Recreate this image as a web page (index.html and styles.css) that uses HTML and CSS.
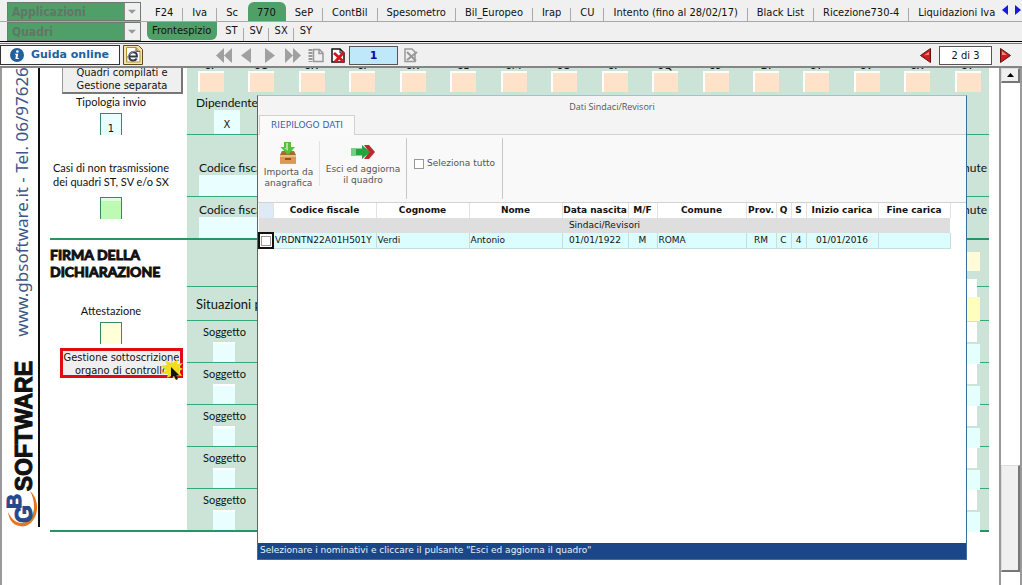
FILE: index.html
```html
<!DOCTYPE html>
<html lang="it">
<head>
<meta charset="utf-8">
<title>GB Software - 770</title>
<link rel="stylesheet" href="styles.css">
</head>
<body>
<div class="app">
  <header class="menus">
    <div class="menu-row">
      <select class="menu-select" aria-label="Applicazioni"><option>Applicazioni</option></select>
      <nav class="tabs tabs-main">
        <a href="#">F24</a><a href="#">Iva</a><a href="#" class="no-sep">Sc</a><a href="#" class="active">770</a><a href="#">SeP</a><a href="#">ContBil</a><a href="#">Spesometro</a><a href="#">Bil_Europeo</a><a href="#">Irap</a><a href="#">CU</a><a href="#">Intento (fino al 28/02/17)</a><a href="#">Black List</a><a href="#">Ricezione730-4</a><a href="#" class="no-sep">Liquidazioni Iva</a>
      </nav>
      <div class="tab-scroll">
        <button type="button" aria-label="Schede precedenti"><svg width="6" height="10" viewBox="0 0 6 10"><path d="M6 0v10L0 5z" fill="#1818e0"/></svg></button>
        <button type="button" aria-label="Schede successive"><svg width="6" height="10" viewBox="0 0 6 10"><path d="M0 0v10l6-5z" fill="#1818e0"/></svg></button>
      </div>
    </div>
    <div class="menu-row">
      <select class="menu-select" aria-label="Quadri"><option>Quadri</option></select>
      <nav class="tabs tabs-sub">
        <a href="#" class="active">Frontespizio</a><a href="#">ST</a><a href="#">SV</a><a href="#">SX</a><a href="#" class="no-sep">SY</a>
      </nav>
    </div>
  </header>

  <div class="toolbar">
    <button type="button" class="guide">
      <svg width="14" height="14" viewBox="0 0 14 14"><circle cx="7" cy="7" r="7" fill="#22609c"/><circle cx="7.4" cy="3.5" r="1.3" fill="#fff"/><path d="M5 5.8h3.2L7.5 10h1.3v1H5.4L6 6.8H5z" fill="#fff"/></svg>
      Guida online
    </button>
    <button type="button" class="browser" aria-label="Apri nel browser">
      <svg width="20" height="20" viewBox="0 0 20 20"><path d="M.5.500h15l4 4v15H.5z" fill="#f5e3a8" stroke="#5c4a1c"/><path d="M3.500 2.500h9.500l4 4v10.500h-13.500z" fill="#fff" stroke="#b39238"/><path d="M13 2.500v4h4" fill="#d8b95a" stroke="#7c6428"/><path d="M6.500 11.500H14c0-2.600-1.600-4.200-3.800-4.200S6.200 9 6.200 11.500s1.700 4 4 4c1.600 0 2.900-.7 3.500-2" fill="none" stroke="#333b48" stroke-width="1.900"/><path d="M4 16C2.500 12 8 6 15 5.500" fill="none" stroke="#8b8f98"/></svg>
    </button>
    <div class="pager">
      <button type="button" aria-label="Primo"><svg width="16" height="15" viewBox="0 0 16 15"><path d="M8 0v15L0 7.500zM16 0v15L8 7.500z" fill="#a0a0a0"/></svg></button>
      <button type="button" aria-label="Precedente"><svg width="16" height="15" viewBox="0 0 16 15"><path d="M12 0v15L2 7.500z" fill="#a0a0a0"/></svg></button>
      <button type="button" aria-label="Successivo"><svg width="16" height="15" viewBox="0 0 16 15"><path d="M3 0v15l10-7.500z" fill="#a0a0a0"/></svg></button>
      <button type="button" aria-label="Ultimo"><svg width="16" height="15" viewBox="0 0 16 15"><path d="M0 0v15l8-7.500zM8 0v15l8-7.500z" fill="#a0a0a0"/></svg></button>
      <button type="button" aria-label="Nuovo"><svg width="16" height="15" viewBox="0 0 16 15"><path d="M5.500 1.500h6l3.500 3.500v8.500H5.500zM11 1.500V5.500h4" fill="#f0f0f0" stroke="#999" stroke-width="1.500"/><path d="M2.500 1v13" stroke="#999" stroke-width="4" stroke-dasharray="2 1"/></svg></button>
      <button type="button" aria-label="Elimina"><svg width="16" height="15" viewBox="0 0 16 15"><path d="M1 1h8l4 4v9H1z" fill="#fff" stroke="#111" stroke-width="1.500"/><path d="M9 1v4h4" fill="none" stroke="#111"/><path d="M3 5l10 9M13 4L4 14" stroke="#d8141c" stroke-width="2.800"/></svg></button>
      <input class="record" type="text" value="1" aria-label="Record">
      <button type="button" aria-label="Annulla"><svg width="16" height="15" viewBox="0 0 16 15"><path d="M2 1h7l3 3v9.500H2z" fill="#f0f0f0" stroke="#999" stroke-width="1.500"/><path d="M4 4l9 9M14 4L4 12" stroke="#999" stroke-width="2.200"/></svg></button>
    </div>
    <div class="page-nav">
      <button type="button" aria-label="Pagina precedente"><svg width="11" height="15" viewBox="0 0 11 15"><path d="M10.500.5v14L.5 7.500z" fill="#cf1b1b" stroke="#651010"/><path d="M9 4L4 7.200 9 7z" fill="#f08a80"/></svg></button>
      <input class="page-no" type="text" value="2 di 3" aria-label="Pagina">
      <button type="button" aria-label="Pagina successiva"><svg width="11" height="15" viewBox="0 0 11 15"><path d="M.5.500v14l10-7z" fill="#cf1b1b" stroke="#651010"/><path d="M2 3l5 4H2z" fill="#f08a80"/></svg></button>
    </div>
  </div>

  <main class="workspace">
    <aside class="brand">
      <div class="brand-inner">
        <span class="brand-url">www.gbsoftware.it - Tel. 06/97626336</span>
        <span class="brand-name">SOFTWARE</span>
        <svg class="brand-logo" width="32" height="36" viewBox="0 0 32 36" aria-label="GB">
          <path d="M24 0C34 8 34 29 20 35C10 37 3 31 2 21C7 32 16 35 23 29C30 22 29 9 24 0z" fill="#e8761e"/>
          <g fill="#27498c" stroke="#27498c" font-family="Liberation Sans, sans-serif" font-weight="bold">
            <text transform="translate(26 32) rotate(-90)" font-size="23">G</text>
            <text transform="translate(15 18) rotate(-90)" font-size="21">B</text>
          </g>
        </svg>
      </div>
    </aside>

    <div class="form">
      <section class="section">
        <div class="section-left">
          <button type="button" class="form-button compiled">Quadri compilati e<br>Gestione separata</button>
          <label class="caption" for="tipo">Tipologia invio</label>
          <input class="box" id="tipo" type="text" value="1">
          <label class="caption no-send" for="casi">Casi di non trasmissione<br>dei quadri ST, SV e/o SX</label>
          <input class="box green" id="casi" type="text">
        </div>
        <div class="section-right">
          <div class="line codes">
            <div class="quadri">
              <label>SF<input type="text"></label><label>SG<input type="text"></label><label>SH<input type="text"></label><label>SI<input type="text"></label><label>SK<input type="text"></label><label>SL<input type="text"></label><label>SM<input type="text"></label><label>SO<input type="text"></label><label>SP<input type="text"></label><label>SQ<input type="text"></label><label>SS<input type="text"></label><label>DI<input type="text"></label><label>ST<input type="text"></label><label>SV<input type="text"></label><label>SX<input type="text"></label><label>SY<input type="text"></label>
            </div>
            <label class="employee">Dipendente<input type="text" value="X"></label>
          </div>
          <div class="line fiscal first">
            <label>Codice fiscale<input type="text"></label>
            <span>ritenute</span>
          </div>
          <div class="line fiscal last">
            <label>Codice fiscale<input type="text"></label>
            <span>ritenute</span>
          </div>
        </div>
      </section>

      <section class="section signature">
        <div class="section-left">
          <h2>FIRMA DELLA<br>DICHIARAZIONE</h2>
          <label class="caption" for="attest">Attestazione</label>
          <input class="box yellow" id="attest" type="text">
          <button type="button" class="form-button control">Gestione sottoscrizione<br>organo di controllo
            <svg class="pointer" width="24" height="22" viewBox="0 0 24 22"><path d="M11 0l2 5 5-4-1 5 6-1-4 4 4 2-4 2 3 5-6-1-1 4-4-3-4 2 1-4-7 0 5-4-5-4 6-1-2-5 6 3z" fill="#f1dc22"/><path d="M11 9v11l3-2 2 4 2-1-2-4h3z" fill="#111"/></svg>
          </button>
        </div>
        <div class="section-right">
          <div class="line sign-row"><i class="cell pale"></i></div>
          <div class="line special"><span>Situazioni particolari</span><i class="cell bright"></i></div>
          <div class="line subject"><label>Soggetto<input type="text"></label><i class="cell"></i></div>
          <div class="line subject"><label>Soggetto<input type="text"></label><i class="cell"></i></div>
          <div class="line subject"><label>Soggetto<input type="text"></label><i class="cell"></i></div>
          <div class="line subject"><label>Soggetto<input type="text"></label><i class="cell"></i></div>
          <div class="line subject"><label>Soggetto<input type="text"></label><i class="cell"></i></div>
        </div>
      </section>
    </div>

    <div class="scrollbar" aria-hidden="true">
      <div class="scroll-up"><svg width="7" height="4" viewBox="0 0 7 4"><path d="M0 4h7L3.500 0z"/></svg></div>
      <div class="scroll-thumb"></div>
    </div>

    <div class="dialog" role="dialog" aria-labelledby="dlg-title">
      <div class="dialog-head">
        <div class="dialog-title" id="dlg-title">Dati Sindaci/Revisori</div>
        <button type="button" class="dialog-tab">RIEPILOGO DATI</button>
      </div>
      <div class="ribbon">
        <div class="ribbon-group import">
          <button type="button">
            <svg width="20" height="22" viewBox="0 0 20 22"><path d="M4 9h12l2 4v8.500H2V13z" fill="#a86a2c"/><path d="M2 13h16v8.500H2z" fill="#d99a55"/><path d="M2 13h16v2H2z" fill="#edbd82"/><path d="M7 16h6v2H7z" fill="#8e561d"/><path d="M6 0h7v5h4l-7 8-7.500-8H6z" fill="#55c233"/><path d="M8 1h2v8L6 6h2z" fill="#a8e88b"/></svg>
            Importa da<br>anagrafica
          </button>
        </div>
        <div class="ribbon-group leave">
          <button type="button">
            <svg width="24" height="14" viewBox="0 0 24 14"><path d="M13 0h5l6 7-6 7h-5l5-7z" fill="#b82b2b"/><path d="M0 3.500h11V0l8 7-8 7v-3.500H0z" fill="#22a53e"/><path d="M0 3.500h5v7H0z" fill="#72cf83"/></svg>
            Esci ed aggiorna<br>il quadro
          </button>
        </div>
        <div class="ribbon-group pick">
          <label><input type="checkbox">Seleziona tutto</label>
        </div>
      </div>
      <div class="dialog-body">
        <table class="grid">
          <colgroup><col class="c-check"><col class="c-code"><col class="c-name"><col class="c-name"><col class="c-birth"><col class="c-sex"><col class="c-town"><col class="c-prov"><col class="c-flag"><col class="c-flag"><col class="c-date"><col class="c-date"></colgroup>
          <thead><tr><th class="corner"></th><th>Codice fiscale</th><th>Cognome</th><th>Nome</th><th>Data nascita</th><th>M/F</th><th>Comune</th><th>Prov.</th><th>Q</th><th>S</th><th>Inizio carica</th><th>Fine carica</th></tr></thead>
          <tbody>
            <tr class="group"><td colspan="12">Sindaci/Revisori</td></tr>
            <tr class="person"><td class="pick-cell"><input type="checkbox" aria-label="Seleziona Verdi Antonio"></td><td>VRDNTN22A01H501Y</td><td>Verdi</td><td>Antonio</td><td class="mid">01/01/1922</td><td class="mid">M</td><td>ROMA</td><td class="mid">RM</td><td class="mid">C</td><td class="mid">4</td><td class="mid">01/01/2016</td><td></td></tr>
          </tbody>
        </table>
      </div>
      <div class="dialog-foot">Selezionare i nominativi e cliccare il pulsante "Esci ed aggiorna il quadro"</div>
    </div>
  </main>
</div>
</body>
</html>
```
FILE: styles.css
```css
* { box-sizing: border-box; }

body {
  margin: 0;
  background: #f0f0f0;
  color: #111;
  font: 11px/14px "DejaVu Sans Condensed", "DejaVu Sans", sans-serif;
}

button, input, select {
  margin: 0;
  padding: 0;
  border: 0;
  border-radius: 0;
  background: none;
  color: inherit;
  font: inherit;
}

a { color: inherit; text-decoration: none; }
svg { display: block; flex: none; }

.app { display: flex; flex-direction: column; height: 100vh; overflow: hidden; }

/* Application and section menus */
.menus { border-bottom: 1px solid #000; flex: none; }
.menu-row { display: flex; align-items: stretch; height: 19px; padding-left: 7px; }
.menu-row:first-child { height: 22px; padding-top: 2px; border-bottom: 1px solid #a8a8a8; }

.menu-select {
  appearance: none;
  width: 134px;
  flex: none;
  padding-left: 4px;
  border: 1px solid #6f7a72;
  background: #4f9f68 url("data:image/svg+xml,%3Csvg xmlns='http://www.w3.org/2000/svg' width='16' height='18'%3E%3Cpath d='M0 0h16v18H0z' fill='%23f0f0f0'/%3E%3Cpath d='M.5 0v18' stroke='%23888'/%3E%3Cpath d='M4 7h8l-4 4z' fill='%23999'/%3E%3C/svg%3E") no-repeat right center;
  color: #637568;
  font: bold 12px/16px "DejaVu Sans Condensed", "DejaVu Sans", sans-serif;
}

.tabs { display: flex; align-items: stretch; white-space: nowrap; }
.tabs a { position: relative; padding: 4px 10px 0 9px; }
.tabs a:not(.no-sep):not(.active)::after {
  content: "";
  position: absolute;
  right: 0;
  top: 6px;
  bottom: 0;
  border-right: 1px solid #aaa;
}
.tabs-main { flex: 1; min-width: 0; margin-left: 5px; overflow: hidden; }
.tabs-main .active { border-radius: 6px 6px 0 0; background: #4f9f68; }
.tabs-sub { margin-left: 6px; }
.tabs-sub a { padding: 2px 6px 0; }
.tabs-sub a:not(.active)::after { top: 1px; bottom: 6px; }
.tabs-sub .active { padding: 2px 6px 0 5px; margin: 0 2px 1px 0; border-radius: 0 0 6px 6px; background: #4f9f68; }
.tab-scroll { display: flex; align-items: flex-start; gap: 7px; padding: 3px 1px 0 4px; }

/* Toolbar */
.toolbar {
  display: flex;
  align-items: center;
  flex: none;
  height: 25px;
  margin-top: 1px;
  border-top: 1px solid #777;
  border-bottom: 2px solid #858585;
}
.guide {
  display: flex;
  align-items: center;
  gap: 7px;
  height: 20px;
  width: 120px;
  padding-left: 9px;
  border: 1px solid #333;
  background: #fcfcfc;
  color: #22609c;
  font: bold 11px/14px "DejaVu Sans", sans-serif;
  white-space: nowrap;
}
.browser { margin-left: 3px; }
.pager { display: flex; align-items: center; gap: 7px; margin-left: 73px; }
.record {
  width: 49px;
  height: 19px;
  margin: 0 -2px 0 -5px;
  border: 1px solid #555;
  background: #bfe8fb;
  color: #0b0ba8;
  text-align: center;
  font: bold 11px/16px "DejaVu Sans", sans-serif;
}
.page-nav { display: flex; align-items: center; gap: 8px; margin-left: auto; padding-right: 11px; }
.page-no { width: 53px; height: 19px; border: 1px solid #555; background: #fff; text-align: center; }

/* Workspace */
.workspace {
  position: relative;
  display: flex;
  flex: 1;
  min-height: 0;
  overflow: hidden;
  border-left: 2px solid #999;
  background: #fff;
}

.brand { width: 38px; flex: none; }
.brand-inner {
  display: flex;
  flex-direction: column;
  justify-content: flex-end;
  align-items: center;
  height: 459px;
  overflow: hidden;
  border-right: 2px solid #111;
  white-space: nowrap;
}
.brand-url, .brand-name { flex: none; writing-mode: vertical-rl; transform: rotate(180deg); }
.brand-url { margin: 0 0 24px 4px; color: #3c5688; font: 17px/24px "Noto Sans", sans-serif; }
.brand-name { margin-left: 8px; color: #111; font: bold 23px/24px "Liberation Sans", sans-serif; -webkit-text-stroke: 1px #111; }
.brand-logo { align-self: flex-end; }

.form { flex: 1; min-width: 0; padding: 0 10px; }
.section {
  display: grid;
  grid-template-columns: 137px 1fr;
  border-bottom: 2px solid #2a9264;
}
.section-left { display: flex; flex-direction: column; align-items: center; padding-right: 15px; }
.section-right { display: flex; flex-direction: column; background: #cce4d7; font: 12px/14px Lato, sans-serif; }
.caption { text-align: center; white-space: nowrap; font: 11px/14px Lato, sans-serif; }

.box {
  width: 22px;
  height: 22px;
  border: 1px solid #35886b;
  border-bottom: 0;
  background: #e9ffff;
  text-align: center;
  padding-top: 8px;
}
.box.green { background: #bdfbb4; box-shadow: inset 0 3px #e2fbe0; }
.box.yellow { background: #ffffd8; }

.form-button { background: #efefef; line-height: 13px; white-space: nowrap; }
.compiled {
  align-self: flex-end;
  width: 121px;
  height: 34px;
  margin: -8px -11px 1px 0;
  padding-top: 4px;
  border: 1px solid #999;
  border-right: 2px solid #777;
  border-bottom: 2px solid #777;
}
.compiled + .caption { margin-bottom: 4px; }
.no-send { margin: 26px 0 8px; }
.box.green { margin-bottom: 18px; }

.line { display: flex; justify-content: space-between; border-bottom: 1px solid #35a878; }
.codes { flex-direction: column; align-items: flex-start; height: 67px; }
.quadri {
  display: flex;
  justify-content: space-between;
  align-self: stretch;
  height: 26px;
  overflow: hidden;
  padding: 0 8px 0 11px;
}
.quadri label { display: flex; flex-direction: column; align-items: center; font: bold 10px/11px Lato, sans-serif; margin-top: -8px; }
.quadri input { width: 26px; height: 23px; border: solid #fff; border-width: 2px 0 0 2px; background: #fee3ca; }
.employee { display: flex; flex-direction: column; align-items: center; margin: 4px 0 0 9px; line-height: 14px; }
.employee input { width: 26px; height: 24px; background: #e9ffff; text-align: center; font: 11px/14px "DejaVu Sans Condensed", sans-serif; padding-top: 5px; }

.fiscal label {
  display: flex;
  flex-direction: column;
  justify-content: flex-end;
  width: 70px;
  padding-left: 12px;
  overflow: hidden;
  white-space: nowrap;
}
.fiscal input { width: 120px; height: 21px; background: #e9ffff; }
.fiscal span { width: 21px; margin-right: 2px; overflow: hidden; direction: rtl; white-space: nowrap; }
.first { height: 62px; }
.first span { padding-top: 26px; }
.last { height: 41px; border-bottom: 0; }
.last span { padding-top: 6px; }

.signature h2 { align-self: stretch; margin: 6px 0 24px; font: bold 14px/17px Lato, sans-serif; -webkit-text-stroke: 1px #111; }
.signature .caption { margin-bottom: 4px; }
.control {
  position: relative;
  align-self: flex-end;
  width: 123px;
  height: 30px;
  margin: 4px -11px 0 0;
  border: 3px solid #e00c14;
}
.pointer { position: absolute; right: -4px; bottom: -5px; }

.sign-row { height: 47px; justify-content: flex-end; }
.special { height: 34px; padding-left: 9px; font: 13px/16px Lato, sans-serif; }
.special span { width: 61px; padding-top: 9px; overflow: hidden; white-space: nowrap; }
.cell { width: 80px; margin-right: 9px; }
.pale { height: 19px; margin-top: 12px; background: #fffbd9; }
.bright { height: 24px; margin-top: 10px; background: #ffffbd; box-shadow: -3px -18px #fff; }
.subject { height: 42px; }
.subject label { display: flex; flex-direction: column; align-items: center; gap: 3px; padding: 4px 0 0 16px; font: 11px/14px Lato, sans-serif; }
.subject input { width: 22px; height: 21px; background: #e9ffff; border-top: 2px solid #fff; }
.subject .cell { height: 20px; margin-top: 23px; background: #e5ffff; box-shadow: -3px -22px #fff; }
.subject:last-child { border-bottom: 0; height: 41px; }

/* Scrollbar of the sheet */
.scrollbar {
  display: flex;
  flex-direction: column;
  justify-content: space-between;
  width: 23px;
  flex: none;
  padding-bottom: 13px;
  border-left: 2px solid #999;
  border-right: 2px solid #999;
  background: #fff;
}
.scroll-up, .scroll-thumb { border: 1px solid #ddd; border-right: 2px solid #777; border-bottom: 2px solid #777; background: #f0f0f0; }
.scroll-up { display: grid; place-items: center; height: 15px; }
.scroll-thumb { height: 107px; }

/* Dialog */
.dialog {
  position: absolute;
  inset: 27px 55px 25px 255px;
  display: flex;
  flex-direction: column;
  border: 1px solid #3d6d9e;
  border-top-color: #9fc3d2;
  background: #fff;
  font: 9px/11px "DejaVu Sans", sans-serif;
}
.dialog-head { background: #f4f4f4; border-bottom: 1px solid #d2d2d2; }
.dialog-title { padding: 5px 0 3px; text-align: center; color: #555; font: 9px/11px "Open Sans", sans-serif; }
.dialog-tab {
  display: block;
  height: 20px;
  width: 96px;
  margin: 0 0 -1px 1px;
  border: 1px solid #d2d2d2;
  border-bottom: 0;
  background: #fafafa;
  color: #3a62a5;
  white-space: nowrap;
}
.ribbon { display: flex; height: 68px; border-bottom: 1px solid #d2d2d2; background: #f9f9f9; color: #555; }
.ribbon-group { display: flex; justify-content: center; margin: 3px 0; border-right: 1px solid #c6c6c6; }
.ribbon-group button { height: 49px; white-space: nowrap; }
.ribbon-group svg { margin: 0 auto 4px; }
.import { width: 62px; margin: 6px 0 16px; border-color: #e2e2e2; }
.import svg { margin-bottom: 3px; }
.leave { width: 87px; }
.leave button { padding-top: 6px; }
.leave svg { margin-bottom: 5px; }
.pick { width: 96px; align-items: center; }
.pick label { display: flex; align-items: center; gap: 3px; margin-top: -10px; white-space: nowrap; }
input[type="checkbox"] { appearance: none; width: 10px; height: 10px; border: 1px solid #999; background: #fff; }

.dialog-body { flex: 1; min-height: 0; }
.grid { table-layout: fixed; width: 692px; border-collapse: collapse; }
.c-check { width: 14px; }
.c-code { width: 103px; }
.c-name { width: 93px; }
.c-birth { width: 66px; }
.c-sex { width: 29px; }
.c-town { width: 89px; }
.c-prov { width: 30px; }
.c-flag { width: 15px; }
.c-date { width: 72px; }
.grid th, .grid td { height: 15px; padding: 0 1px; white-space: nowrap; }
.grid th { padding: 0; border-right: 1px solid #e2e2e2; font: bold 9px/11px "DejaVu Sans", sans-serif; color: #111; }
.grid .corner { background: #dcebf5; }
.grid .group td { background: #dedede; text-align: center; }
.person td { border: 1px solid #c5dddd; border-width: 0 1px 1px 0; background: #dcfdfd; }
.person .mid { text-align: center; }
.person .pick-cell { padding: 0; border: 2px solid #111; background: #fff; }
.pick-cell input { display: block; margin: 0 auto; }

.dialog-foot { height: 16px; padding: 2px 2px 0; background: #1b4788; color: #e8f0fa; white-space: nowrap; }
```
